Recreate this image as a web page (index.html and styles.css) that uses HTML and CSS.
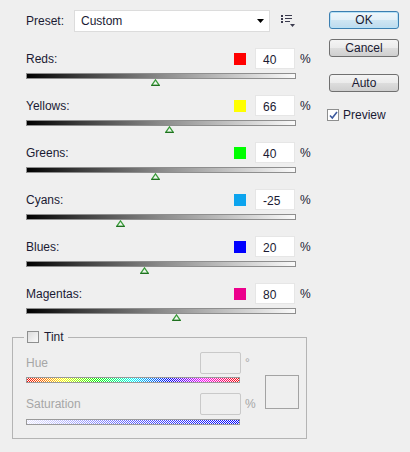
FILE: index.html
```html
<!DOCTYPE html>
<html lang="en">
  <head>
    <meta charset="UTF-8" />
    <meta name="viewport" content="width=device-width, initial-scale=1.0" />
    <title>Black &amp; White</title>
    <link rel="stylesheet" href="styles.css">
  </head>
  <body>
    <div class="dialog">
      <div class="main">
        <div class="preset">
          <span class="preset-label">Preset:</span>
          <div class="select">
            <span>Custom</span>
            <svg class="arrow" width="7" height="4" viewBox="0 0 7 4"><path d="M0 0h7L3.5 4z" fill="#000"/></svg>
          </div>
          <svg class="menu-icon" width="14" height="12" viewBox="0 0 14 12">
            <g fill="#3b3b4e">
              <rect x="0" y="0" width="2" height="2"/>
              <rect x="0" y="3" width="2" height="2"/>
              <rect x="0" y="6" width="2" height="2"/>
              <rect x="4" y="0" width="7" height="1"/>
              <rect x="4" y="3" width="7" height="1"/>
              <rect x="4" y="6" width="5" height="1"/>
              <path d="M9 9h5l-2.5 3z"/>
            </g>
          </svg>
        </div>

        <div class="channels">
          <div class="row">
            <div class="row-head">
              <span class="label">Reds:</span>
              <span class="swatch red"></span>
              <span class="num">40</span>
              <span class="pct">%</span>
            </div>
            <div class="track"><span class="thumb" style="left: 48%"></span></div>
          </div>
          <div class="row">
            <div class="row-head">
              <span class="label">Yellows:</span>
              <span class="swatch yellow"></span>
              <span class="num">66</span>
              <span class="pct">%</span>
            </div>
            <div class="track"><span class="thumb" style="left: 53.2%"></span></div>
          </div>
          <div class="row">
            <div class="row-head">
              <span class="label">Greens:</span>
              <span class="swatch green"></span>
              <span class="num">40</span>
              <span class="pct">%</span>
            </div>
            <div class="track"><span class="thumb" style="left: 48%"></span></div>
          </div>
          <div class="row">
            <div class="row-head">
              <span class="label">Cyans:</span>
              <span class="swatch cyan"></span>
              <span class="num">-25</span>
              <span class="pct">%</span>
            </div>
            <div class="track"><span class="thumb" style="left: 35%"></span></div>
          </div>
          <div class="row">
            <div class="row-head">
              <span class="label">Blues:</span>
              <span class="swatch blue"></span>
              <span class="num">20</span>
              <span class="pct">%</span>
            </div>
            <div class="track"><span class="thumb" style="left: 44%"></span></div>
          </div>
          <div class="row">
            <div class="row-head">
              <span class="label">Magentas:</span>
              <span class="swatch magenta"></span>
              <span class="num">80</span>
              <span class="pct">%</span>
            </div>
            <div class="track"><span class="thumb" style="left: 56%"></span></div>
          </div>
        </div>

        <fieldset class="tint">
          <legend><span class="check"></span>Tint</legend>
          <div class="tint-body">
            <div class="tint-controls">
              <div class="tint-head">
                <span class="tint-label">Hue</span>
                <span class="tint-num"></span>
                <span class="tint-unit">°</span>
              </div>
              <div class="tint-track hue"></div>
              <div class="tint-head sat-head">
                <span class="tint-label">Saturation</span>
                <span class="tint-num"></span>
                <span class="tint-unit">%</span>
              </div>
              <div class="tint-track sat"></div>
            </div>
            <div class="tint-color"></div>
          </div>
        </fieldset>
      </div>

      <div class="side">
        <button class="btn default">OK</button>
        <button class="btn cancel">Cancel</button>
        <button class="btn auto">Auto</button>
        <label class="preview">
          <span class="check on">
            <svg width="9" height="9" viewBox="0 0 9 9"><path d="M1 4.5l2.3 2.5L8 1" fill="none" stroke="#3d5a9e" stroke-width="1.6"/></svg>
          </span>
          Preview
        </label>
      </div>
    </div>
  </body>
</html>
```

FILE: styles.css
```css
body {
  margin: 0;
  background-color: #efefef;
  font-family: "Liberation Sans", Arial, sans-serif;
  font-size: 12px;
  color: #1a1a33;
}

.dialog {
  display: flex;
  width: 410px;
  height: 452px;
}

.main {
  width: 305px;
  padding: 10px 0 0 12px;
}

/* preset line */
.preset {
  display: flex;
  align-items: center;
  height: 22px;
  padding-left: 14px;
}

.preset-label {
  width: 48px;
}

.select {
  display: flex;
  align-items: center;
  justify-content: space-between;
  box-sizing: border-box;
  width: 196px;
  height: 22px;
  padding: 0 5px 0 6px;
  background-color: #fff;
  border: 1px solid #dcdcdc;
}

.menu-icon {
  margin-left: 11px;
}

/* channel sliders */
.channels {
  margin-top: 16px;
  padding-left: 14px;
}

.row {
  margin-bottom: 16px;
}

.row-head {
  display: flex;
  align-items: center;
  width: 284px;
  height: 21px;
}

.label {
  flex: 1;
}

.swatch {
  width: 12px;
  height: 12px;
}

.red { background-color: #ff0000; }
.yellow { background-color: #ffff00; }
.green { background-color: #00ff00; }
.cyan { background-color: #0ca4ee; }
.blue { background-color: #0000ff; }
.magenta { background-color: #ec008c; }

.num {
  box-sizing: border-box;
  width: 40px;
  height: 21px;
  margin-left: 9px;
  padding: 4px 0 0 7px;
  background-color: #fff;
  border: 1px solid #e6e6e6;
}

.pct {
  width: 10px;
  margin-left: 5px;
}

.track {
  position: relative;
  box-sizing: border-box;
  width: 270px;
  height: 6px;
  margin-top: 4px;
  border: 1px solid #8e8e8e;
  background: linear-gradient(to right, #000, #3c3c3c 20%, #8a8a8a 50%, #fafafa);
}

.thumb {
  position: absolute;
  top: 5px;
  width: 9px;
  height: 7px;
  margin-left: -5px;
  background: no-repeat url("data:image/svg+xml;utf8,<svg xmlns='http://www.w3.org/2000/svg' width='9' height='7'><path d='M4.5 0.8L8.3 6.3H0.7z' fill='%23eef6ee' stroke='%23389a38' stroke-width='1.2'/><rect x='0.5' y='5.8' width='8' height='1.2' fill='%231f6f1f'/></svg>");
}

/* tint group */
.tint {
  box-sizing: border-box;
  width: 295px;
  margin: 0;
  padding: 0 0 13px 13px;
  border: 1px solid #b4b4b4;
}

.tint legend {
  display: flex;
  align-items: center;
  margin-left: -2px;
  padding: 0 4px 0 3px;
}

.check {
  display: inline-flex;
  align-items: center;
  justify-content: center;
  box-sizing: border-box;
  width: 12px;
  height: 12px;
  margin-right: 5px;
  border: 1px solid #8e8f8f;
  background: linear-gradient(135deg, #dcdcdc, #fafafa);
}

.check.on {
  background: #fff;
}

.tint-body {
  display: flex;
  padding-top: 8px;
}

.tint-controls {
  width: 232px;
}

.tint-head {
  display: flex;
  align-items: center;
  height: 22px;
  color: #a6a6a6;
}

.tint-label {
  width: 174px;
}

.tint-num {
  box-sizing: border-box;
  width: 41px;
  height: 22px;
  border: 1px solid #c9c9c9;
  border-radius: 2px;
}

.tint-unit {
  margin-left: 4px;
}

.sat-head {
  margin-top: 10px;
}

.tint-track {
  box-sizing: border-box;
  width: 214px;
  height: 6px;
  margin-top: 3px;
  border: 1px solid #9a9a9a;
}

.hue {
  background:
    url("data:image/svg+xml;utf8,<svg xmlns='http://www.w3.org/2000/svg' width='2' height='2' shape-rendering='crispEdges'><rect width='1' height='1' fill='%23fafafa'/><rect x='1' y='1' width='1' height='1' fill='%23fafafa'/></svg>") repeat,
    linear-gradient(to right, #ff0000, #ffff00 17%, #00ff00 33%, #00ffff 50%, #0000ff 67%, #ff00ff 83%, #ff0000);
}

.sat {
  margin-top: 4px;
  background:
    url("data:image/svg+xml;utf8,<svg xmlns='http://www.w3.org/2000/svg' width='2' height='2' shape-rendering='crispEdges'><rect width='1' height='1' fill='%23ffffff'/><rect x='1' y='1' width='1' height='1' fill='%23ffffff'/></svg>") repeat,
    linear-gradient(to right, #e8e8ff, #6060ff 50%, #0000ff);
}

.tint-color {
  box-sizing: border-box;
  width: 34px;
  height: 34px;
  margin: 23px 0 0 7px;
  border: 1px solid #a3a3a3;
}

/* buttons */
.side {
  display: flex;
  flex-direction: column;
  align-items: flex-start;
  margin-left: 12px;
  padding-top: 11px;
}

.btn {
  box-sizing: border-box;
  width: 70px;
  height: 18px;
  padding: 0;
  font-family: inherit;
  font-size: 12px;
  color: #1a1a33;
  border: 1px solid #707070;
  border-radius: 3px;
  background: linear-gradient(#f4f4f4, #ebebeb 50%, #dddddd 51%, #cfcfcf);
}

.default {
  border-color: #3c7fb1;
  box-shadow: inset 0 0 0 1px #b7e1f6;
  background: linear-gradient(#f0f7fb, #e3f0f8 50%, #cfe6f3 51%, #bddbee);
}

.cancel {
  margin-top: 10px;
}

.auto {
  margin-top: 17px;
}

.preview {
  display: flex;
  align-items: center;
  margin-top: 16px;
  margin-left: -2px;
}

.preview .check {
  margin-right: 4px;
}
```
